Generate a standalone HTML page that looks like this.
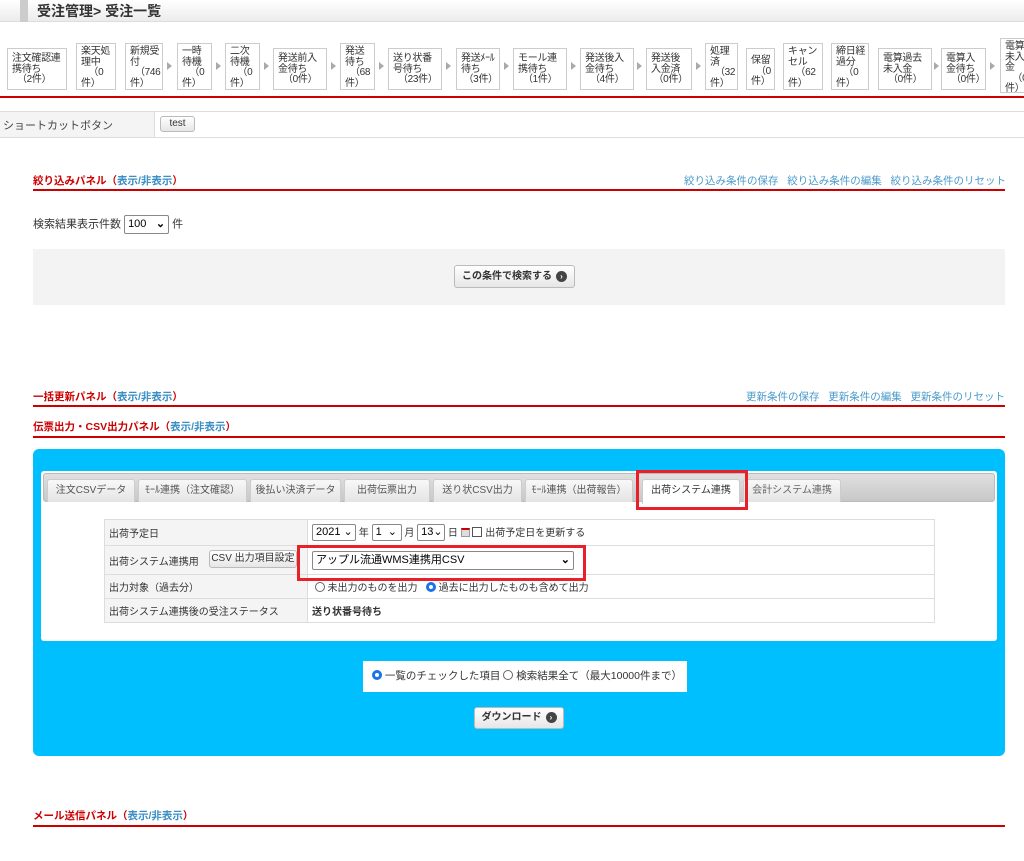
<!DOCTYPE html>
<html><head><meta charset="utf-8"><style>
*{box-sizing:border-box;margin:0;padding:0}
body{width:1024px;height:861px;position:relative;overflow:hidden;background:#fff;font-family:"Liberation Sans","Noto Sans CJK JP",sans-serif;font-size:10px;color:#333}
.a{position:absolute;white-space:nowrap}
.hd{left:0;top:0;width:1024px;height:22px;background:linear-gradient(#fff,#ececec);border-bottom:1px solid #ddd}
.hd .bar{left:20px;top:0;width:8px;height:22px;background:#ccc}
.hd .t{left:37px;top:1px;font-size:14px;font-weight:bold;color:#333}
.st{border:1px solid #ccc;background:#fff;font-size:10px;line-height:10.5px;padding:3px 2px 0 4px;color:#333;overflow:hidden;letter-spacing:-0.3px}
.ar{width:0;height:0;border-left:5px solid #aaa;border-top:4px solid transparent;border-bottom:4px solid transparent}
.red{background:#c00}
.sec{font-size:10.5px;font-weight:bold;color:#c00}
.sec span{color:#3b8fc4}
.lk{color:#4a9acb;font-size:10.5px}
.btn{border:1px solid #bbb;border-radius:3px;background:linear-gradient(#fff,#e6e6e6);font-size:10px;color:#333;text-align:center;font-weight:bold;white-space:nowrap}
.dot{display:inline-block;width:11px;height:11px;border-radius:50%;background:#444;color:#fff;font-size:8px;line-height:11px;text-align:center;vertical-align:middle;margin-left:4px}
.tab{top:479px;height:23px;border:1px solid #ccc;border-bottom:none;background:linear-gradient(#f8f8f8,#e4e4e4);font-size:10px;color:#555;text-align:center;line-height:22px;border-radius:3px 3px 0 0}
table{border-collapse:collapse}
td{border:1px solid #ddd;font-size:10px;padding:0 4px;white-space:nowrap}
td.l{background:#f4f4f4;width:203px}
.sel{display:inline-block;border:1px solid #888;border-radius:2px;background:#fff;font-size:11px;padding:0 3px;height:17px;line-height:15px;color:#000;white-space:nowrap;vertical-align:middle;overflow:hidden}
.rb{display:inline-block;width:10px;height:10px;border-radius:50%;border:1px solid #666;vertical-align:-1px;background:#fff}
.rb.on{border:3px solid #1a73e8}
</style></head><body>
<div class="a hd"><div class="a bar"></div><div class="a t">受注管理&gt; 受注一覧</div></div>

<div class="a st" style="left:7px;top:48px;width:60px;height:42px;padding-top:5px">注文確認連<br>携待ち<br>&nbsp;&nbsp;（2件）</div>
<div class="a st" style="left:76px;top:43px;width:40px;height:47px">楽天処<br>理中<br>&nbsp;&nbsp;&nbsp;（0<br>件）</div>
<div class="a st" style="left:125px;top:43px;width:38px;height:47px">新規受<br>付<br>&nbsp;&nbsp;（746<br>件）</div>
<div class="a ar" style="left:167px;top:62px"></div>
<div class="a st" style="left:177px;top:43px;width:35px;height:47px">一時<br>待機<br>&nbsp;&nbsp;&nbsp;（0<br>件）</div>
<div class="a ar" style="left:216px;top:62px"></div>
<div class="a st" style="left:225px;top:43px;width:35px;height:47px">二次<br>待機<br>&nbsp;&nbsp;&nbsp;（0<br>件）</div>
<div class="a ar" style="left:264px;top:62px"></div>
<div class="a st" style="left:273px;top:48px;width:54px;height:42px;padding-top:5px">発送前入<br>金待ち<br>&nbsp;&nbsp;（0件）</div>
<div class="a ar" style="left:331px;top:62px"></div>
<div class="a st" style="left:340px;top:43px;width:35px;height:47px">発送<br>待ち<br>&nbsp;&nbsp;（68<br>件）</div>
<div class="a ar" style="left:379px;top:62px"></div>
<div class="a st" style="left:388px;top:48px;width:54px;height:42px;padding-top:5px">送り状番<br>号待ち<br>&nbsp;&nbsp;（23件）</div>
<div class="a ar" style="left:446px;top:62px"></div>
<div class="a st" style="left:456px;top:48px;width:44px;height:42px;padding-top:5px">発送ﾒｰﾙ<br>待ち<br>&nbsp;（3件）</div>
<div class="a ar" style="left:504px;top:62px"></div>
<div class="a st" style="left:513px;top:48px;width:54px;height:42px;padding-top:5px">モール連<br>携待ち<br>&nbsp;&nbsp;（1件）</div>
<div class="a ar" style="left:571px;top:62px"></div>
<div class="a st" style="left:580px;top:48px;width:54px;height:42px;padding-top:5px">発送後入<br>金待ち<br>&nbsp;&nbsp;（4件）</div>
<div class="a ar" style="left:637px;top:62px"></div>
<div class="a st" style="left:646px;top:48px;width:46px;height:42px;padding-top:5px">発送後<br>入金済<br>&nbsp;（0件）</div>
<div class="a ar" style="left:696px;top:62px"></div>
<div class="a st" style="left:705px;top:43px;width:33px;height:47px">処理<br>済<br>&nbsp;&nbsp;（32<br>件）</div>
<div class="a st" style="left:746px;top:48px;width:29px;height:42px;padding-top:7px">保留<br>&nbsp;&nbsp;（0<br>件）</div>
<div class="a st" style="left:783px;top:43px;width:40px;height:47px">キャン<br>セル<br>&nbsp;&nbsp;&nbsp;（62<br>件）</div>
<div class="a st" style="left:831px;top:43px;width:38px;height:47px">締日経<br>過分<br>&nbsp;&nbsp;&nbsp;（0<br>件）</div>
<div class="a st" style="left:878px;top:48px;width:54px;height:42px;padding-top:5px">電算過去<br>未入金<br>&nbsp;&nbsp;（0件）</div>
<div class="a ar" style="left:934px;top:62px"></div>
<div class="a st" style="left:941px;top:48px;width:45px;height:42px;padding-top:5px">電算入<br>金待ち<br>&nbsp;&nbsp;（0件）</div>
<div class="a ar" style="left:990px;top:62px"></div>
<div class="a st" style="left:1000px;top:38px;width:34px;height:55px">電算<br>未入<br>金<br>&nbsp;&nbsp;&nbsp;（0<br>件）</div>
<div class="a red" style="left:0;top:96px;width:1024px;height:2px"></div>

<div class="a" style="left:0;top:111px;width:1024px;height:27px;border-top:1px solid #ddd;border-bottom:1px solid #ddd;background:#fff"></div>
<div class="a" style="left:0;top:112px;width:155px;height:25px;background:#f4f4f4;border-right:1px solid #ddd"></div>
<div class="a" style="left:3px;top:117px;font-size:11px;color:#444">ショートカットボタン</div>
<div class="a btn" style="left:160px;top:116px;width:35px;height:16px;font-weight:normal;line-height:14px">test</div>

<div class="a sec" style="left:33px;top:173px">絞り込みパネル（<span>表示/非表示</span>）</div>
<div class="a lk" style="left:684px;top:173px">絞り込み条件の保存&nbsp;&nbsp;&nbsp;絞り込み条件の編集&nbsp;&nbsp;&nbsp;絞り込み条件のリセット</div>
<div class="a red" style="left:33px;top:189px;width:972px;height:2px"></div>
<div class="a" style="left:33px;top:215px;font-size:11px">検索結果表示件数 <span class="sel" style="width:45px;height:19px;line-height:17px">100 <b style="float:right">⌄</b></span> 件</div>
<div class="a" style="left:33px;top:249px;width:972px;height:56px;background:#f3f3f3"></div>
<div class="a btn" style="left:454px;top:265px;width:121px;height:23px;line-height:21px">この条件で検索する<span class="dot">›</span></div>

<div class="a sec" style="left:33px;top:389px">一括更新パネル（<span>表示/非表示</span>）</div>
<div class="a lk" style="left:746px;top:389px">更新条件の保存&nbsp;&nbsp;&nbsp;更新条件の編集&nbsp;&nbsp;&nbsp;更新条件のリセット</div>
<div class="a red" style="left:33px;top:405px;width:972px;height:2px"></div>
<div class="a sec" style="left:33px;top:419px">伝票出力・CSV出力パネル（<span>表示/非表示</span>）</div>
<div class="a red" style="left:33px;top:436px;width:972px;height:2px"></div>

<div class="a" style="left:33px;top:449px;width:972px;height:307px;background:#00bfff;border-radius:6px"></div>
<div class="a" style="left:41px;top:471px;width:956px;height:170px;background:#fff;border-radius:3px"></div>
<div class="a" style="left:43px;top:473px;width:952px;height:29px;background:linear-gradient(#e0e0e0,#c8c8c8);border:1px solid #bbb;border-radius:3px"></div>
<div class="a tab" style="left:47px;width:88px">注文CSVデータ</div>
<div class="a tab" style="left:138px;width:109px">ﾓｰﾙ連携（注文確認）</div>
<div class="a tab" style="left:250px;width:91px">後払い決済データ</div>
<div class="a tab" style="left:344px;width:86px">出荷伝票出力</div>
<div class="a tab" style="left:433px;width:89px">送り状CSV出力</div>
<div class="a tab" style="left:525px;width:108px">ﾓｰﾙ連携（出荷報告）</div>
<div class="a tab" style="left:642px;width:98px;background:#fff;color:#333;height:25px">出荷システム連携</div>
<div class="a tab" style="left:743px;width:98px;color:#666">会計システム連携</div>

<table class="a" style="left:104px;top:519px;width:831px">
<tr style="height:26px"><td class="l">出荷予定日</td><td><span class="sel" style="width:44px">2021 ⌄</span> 年 <span class="sel" style="width:30px">1 &nbsp;⌄</span> 月 <span class="sel" style="width:28px">13⌄</span> 日 <span style="display:inline-block;width:9px;height:9px;border:1px solid #999;border-top:2px solid #c00;background:#ddd;vertical-align:middle"></span> <span style="display:inline-block;width:10px;height:10px;border:1px solid #555;vertical-align:-1px"></span> 出荷予定日を更新する</td></tr>
<tr style="height:29px"><td class="l" style="position:relative">出荷システム連携用<span class="btn" style="position:absolute;left:104px;top:4px;width:88px;height:18px;line-height:16px;font-weight:normal">CSV 出力項目設定</span></td><td><span class="sel" style="width:262px;height:19px;line-height:17px;font-size:11px">アップル流通WMS連携用CSV<b style="float:right">⌄</b></span></td></tr>
<tr style="height:24px"><td class="l">出力対象（過去分）</td><td>&nbsp;<span class="rb"></span> 未出力のものを出力&nbsp;&nbsp;&nbsp;<span class="rb on"></span> 過去に出力したものも含めて出力</td></tr>
<tr style="height:24px"><td class="l">出荷システム連携後の受注ステータス</td><td style="font-weight:bold">送り状番号待ち</td></tr>
</table>

<div class="a" style="left:636px;top:470px;width:112px;height:40px;border:3px solid #e8202a"></div>
<div class="a" style="left:297px;top:545px;width:289px;height:36px;border:3px solid #e8202a"></div>

<div class="a" style="left:363px;top:661px;width:324px;height:31px;background:#fff;font-size:10.5px;line-height:31px;padding-left:9px;color:#333"><span class="rb on"></span> 一覧のチェックした項目 <span class="rb"></span> 検索結果全て（最大10000件まで）</div>
<div class="a btn" style="left:474px;top:707px;width:90px;height:22px;line-height:20px">ダウンロード<span class="dot">›</span></div>

<div class="a sec" style="left:33px;top:808px">メール送信パネル（<span>表示/非表示</span>）</div>
<div class="a red" style="left:33px;top:825px;width:972px;height:2px"></div>
</body></html>
